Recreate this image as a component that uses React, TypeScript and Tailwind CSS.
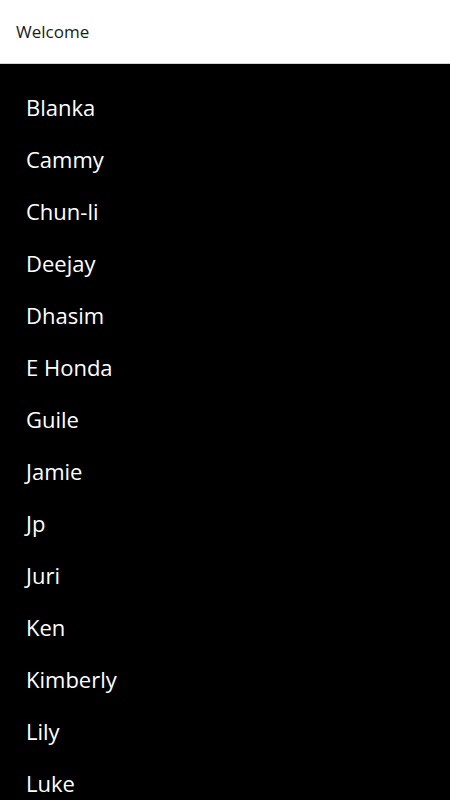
const fighters = [
  "Blanka",
  "Cammy",
  "Chun-li",
  "Deejay",
  "Dhasim",
  "E Honda",
  "Guile",
  "Jamie",
  "Jp",
  "Juri",
  "Ken",
  "Kimberly",
  "Lily",
  "Luke",
];

export default function App() {
  return (
    <div className="h-[800px] overflow-hidden bg-black font-['Open_Sans',sans-serif]">
      <header className="flex h-[64px] items-center border-b border-[#d4d4d4] bg-white px-4">
        <span className="text-[17px] text-[#1a1a1a]">Welcome</span>
      </header>
      <ul className="pt-[17px]">
        {fighters.map((name) => (
          <li key={name} className="flex h-[52px] items-center px-[26px] text-[22px] text-white">
            {name}
          </li>
        ))}
      </ul>
    </div>
  );
}
